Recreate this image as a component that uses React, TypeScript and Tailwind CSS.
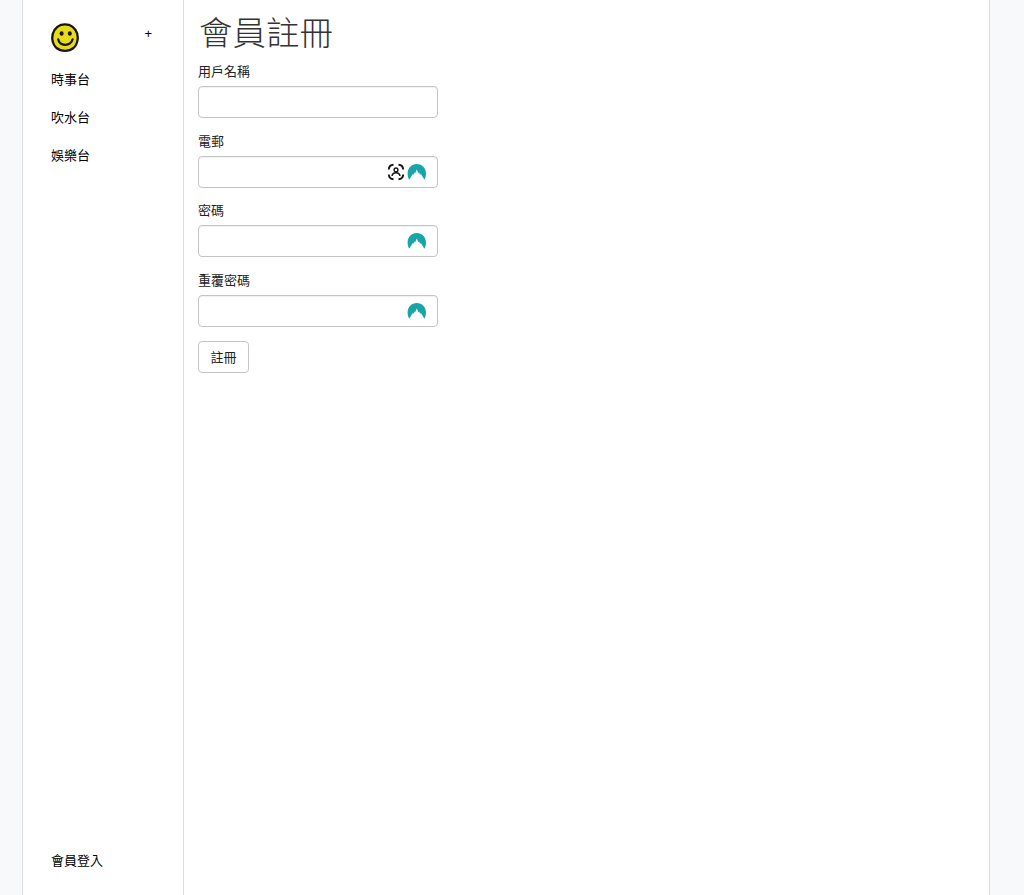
import React from "react";

const boards = ["時事台", "吹水台", "娛樂台"];

function SmileyLogo() {
  return (
    <svg viewBox="0 0 28 29" className="block h-[29px] w-7" aria-hidden="true">
      <path
        d="M10 1.8Q14 .9 18 1.8Q22 3.4 24.5 7Q27.2 11 26.7 16Q26 22 22.5 25Q19 27.8 14 27.8Q9 27.8 5.5 25Q1.8 21.5 1.3 16Q1 11 3.5 7Q6 3.4 10 1.8Z"
        fill="#e6dc1c"
        stroke="#1b1408"
        strokeWidth="2.3"
        strokeLinejoin="round"
      />
      <ellipse cx="10.6" cy="10.5" rx="2" ry="2.2" fill="#1b1408" />
      <ellipse cx="18.8" cy="10.5" rx="2" ry="2.2" fill="#1b1408" />
      <path d="M7.2 16.3C8.6 23.6 19.6 23.6 21.6 16.3" fill="none" stroke="#1b1408" strokeWidth="2.2" strokeLinecap="round" />
    </svg>
  );
}

function MountainIcon() {
  return (
    <svg viewBox="0 0 20 16" className="h-4 w-5" aria-hidden="true">
      <path
        d="M2.2 15.8C-2 7.5 2.8 .1 9.8 .1S21.6 7.5 17.4 15.8L13.9 9.9L13 11L12.2 8.4L11.4 9.3L9.8 5.4L8.2 9.3L7.5 8.6L6.5 10.8L5.8 9.9Z"
        fill="#17a5a7"
      />
    </svg>
  );
}

function ScanUserIcon() {
  return (
    <svg viewBox="0 0 18 18" className="h-[18px] w-[18px]" fill="none" stroke="#161616" aria-hidden="true">
      <path
        d="M1.8 6.5Q2 2 6.5 1.8M11.5 1.8Q16 2 16.2 6.5M16.2 11.5Q16 16 11.5 16.2M6.5 16.2Q2 16 1.8 11.5"
        strokeWidth="1.9"
      />
      <circle cx="9" cy="6.9" r="1.9" strokeWidth="1.4" />
      <path d="M5 13C5.6 8.5 12.4 8.5 13 13" strokeWidth="1.5" />
    </svg>
  );
}

interface FieldProps {
  id: string;
  label: string;
  type?: string;
  children?: React.ReactNode;
}

function Field({ id, label, type = "text", children }: FieldProps) {
  return (
    <div className="h-[69.7px]">
      <label htmlFor={id} className="block h-6 text-[13px] leading-[17px]">
        {label}
      </label>
      <div className="flex h-8 w-60 items-center rounded-[4px] border border-[#c4c4c4] pr-[10px] shadow-[inset_0_1px_1px_rgba(0,0,0,0.06)]">
        <input id={id} type={type} className="h-full min-w-0 flex-1 bg-transparent px-3 outline-none" />
        <div className="flex items-center gap-[2px]">{children}</div>
      </div>
    </div>
  );
}

export default function App() {
  return (
    <div className="flex h-[895px] bg-[#f7f9fb] pr-[34px] pl-[22px] font-['Noto_Sans_CJK_TC',sans-serif] text-[13px] font-normal text-[#222]">
      <div className="flex flex-1 border-x border-[#dcdcdc] bg-white">
        <aside className="flex w-[161px] flex-col justify-between border-r border-[#dcdcdc] pl-7 text-black">
          <div>
            <div className="flex justify-between pt-[23px] pr-[31px]">
              <SmileyLogo />
              <a href="#" className="h-5 font-['Liberation_Sans',sans-serif] text-[13px] leading-[22px] font-normal">+</a>
            </div>
            <nav className="flex flex-col pt-2">
              {boards.map((board) => (
                <a key={board} href="#" className="h-[38px] leading-[38px]">{board}</a>
              ))}
            </nav>
          </div>
          <a href="#" className="mb-4 h-[38px] leading-[38px]">會員登入</a>
        </aside>
        <main className="pl-[14px]">
          <h1 className="h-[62px] pt-2 pl-px text-[33.5px] leading-[45px] font-light text-[#333]">會員註冊</h1>
          <form onSubmit={(event) => event.preventDefault()}>
            <Field id="username" label="用戶名稱" />
            <Field id="email" label="電郵" type="email">
              <ScanUserIcon />
              <MountainIcon />
            </Field>
            <Field id="password" label="密碼" type="password">
              <MountainIcon />
            </Field>
            <Field id="confirm" label="重覆密碼" type="password">
              <MountainIcon />
            </Field>
            <button type="submit" className="h-8 w-[51px] rounded-[4px] border border-[#c4c4c4] bg-white leading-[30px]">
              註冊
            </button>
          </form>
        </main>
      </div>
    </div>
  );
}
